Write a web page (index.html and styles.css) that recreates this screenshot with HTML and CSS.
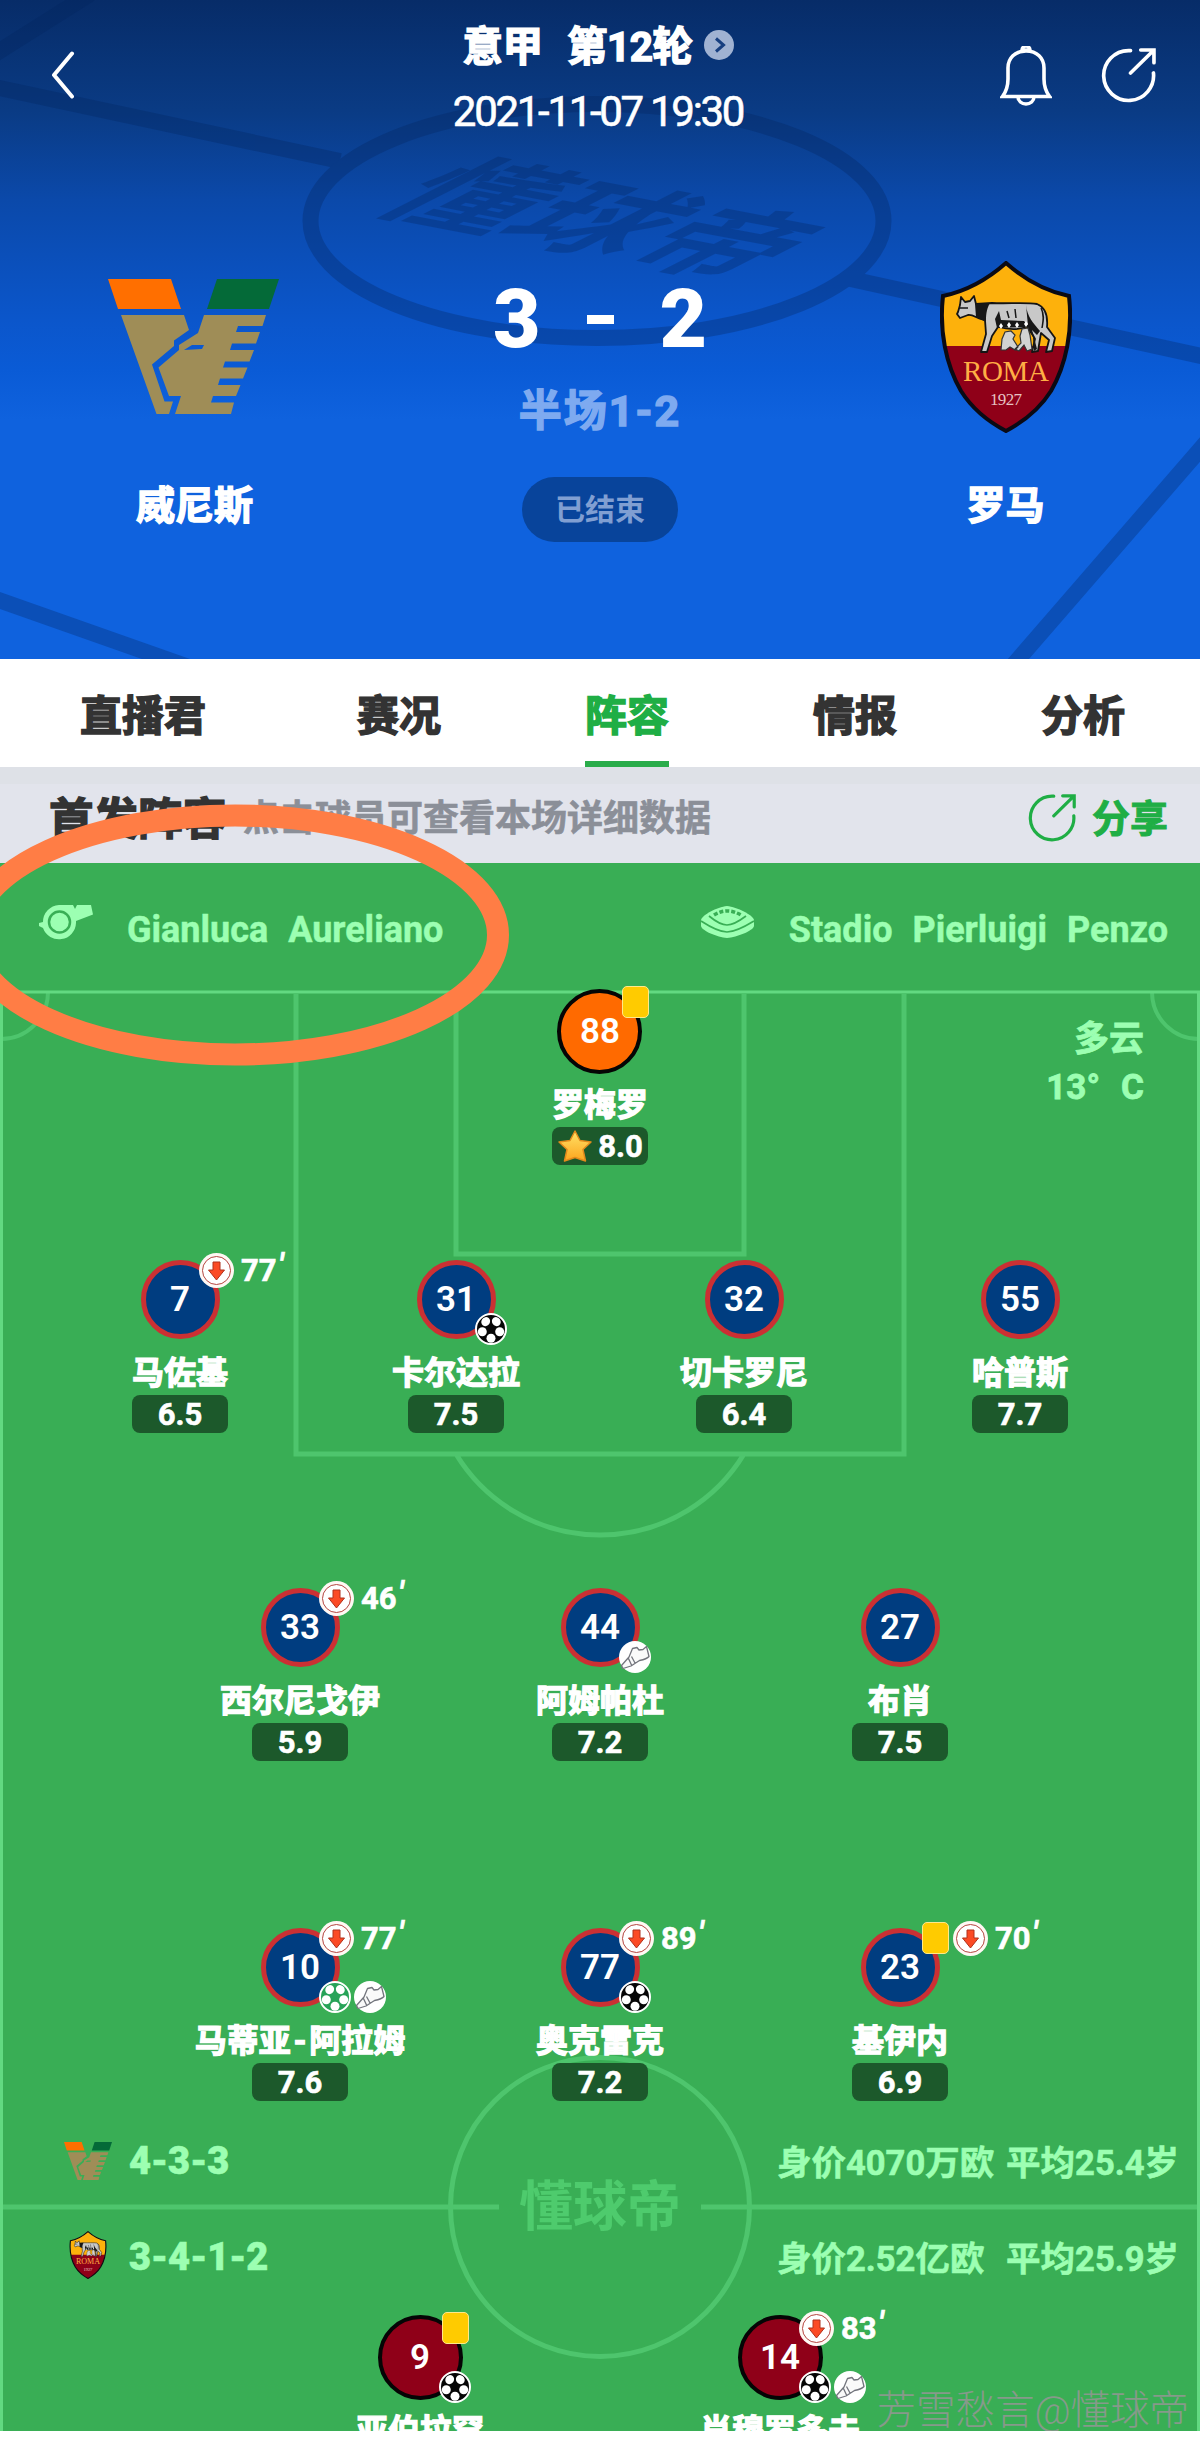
FILE: index.html
```html
<!DOCTYPE html>
<html lang="zh-CN">
<head>
  <meta charset="UTF-8">
  <meta name="viewport" content="width=device-width, initial-scale=1.0">
  <title>威尼斯 3-2 罗马</title>
  <link rel="stylesheet" href="styles.css">
</head>

<body>
  <!-- Shared icons -->
  <svg class="defs" width="0" height="0">
    <symbol id="venezia" viewBox="108 279 171 135">
      <path fill="#ff6f00" d="M108 279h63l10 30h-63z"/>
      <path fill="#046a38" d="M217 279h62l-10 30h-62z"/>
      <path fill="#9f8d57" d="M121 315h63l5 15-15 10.500v5.500l-22 18.500 12.500 37h8.500l-4 12.500h-12.500z"/>
      <path fill="#9f8d57" fill-rule="evenodd" d="M204 315H266L262.500 326H238L236 332H260L256 343.500H232L230 350H254L249.500 361.500H225L223 367.500H247.500L243 378.500H220L218 385H240.500L236 396H213L211 402.500H234L231 414H175L181 396H169L158.500 367.500L179 350V345L198 333ZM184 350L192 345H204L202 349Z"/>
    </symbol>
    <symbol id="roma" viewBox="0 0 132 172">
      <path d="M66 2C49 17 27 30 3 35C-1 70 6 104 21 130C33 149 49 161 66 170C83 161 99 149 111 130C126 104 133 70 129 35C105 30 83 17 66 2Z" fill="#fdb10c"/>
      <path d="M5 85H127C124 102 119 116 111 130C99 149 83 161 66 170C49 161 33 149 21 130C13 116 8 102 5 85Z" fill="#8f0018"/>
      <path d="M66 2C49 17 27 30 3 35C-1 70 6 104 21 130C33 149 49 161 66 170C83 161 99 149 111 130C126 104 133 70 129 35C105 30 83 17 66 2Z" fill="none" stroke="#0a0a14" stroke-width="4"/>
      <!-- wolf -->
      <path d="M18 51L20 44L21 36L25 41L30 40L34 35L36 43L52 42C66 43 86 41 97 43C105 46 108 54 107 66L115 77L112 90L106 91L109 79L101 72L98 90L92 91L95 78L88 65C78 70 66 68 58 66L52 75L47 91H41L46 73L45 59C39 59 33 53 28 54L20 57L17 53Z" fill="#c8c8c8" stroke="#141414" stroke-width="1.800" stroke-linejoin="round"/>
      <path d="M35 43L50 42C46 49 46 55 46 61L36 56ZM59 50L61 59L84 60L92 69L97 88L94 90L93 76L86 66L57 67L55 58ZM86 44C87 55 93 62 100 70L97 74L88 65Z" fill="#171717"/>
      <path d="M19 47h9M67 50l2 7M75 48l1 9M101 47c4 7 2 14 1 20" fill="none" stroke="#171717" stroke-width="1.500"/>
      <path d="M59 65l2-3 2 3-2 3zM67 64l2-3 2 3-2 3zM75 64l2-3 2 3-2 3zM84 63l2-3 2 3-2 3z" fill="#fff"/>
      <path d="M62 78l3-7 6-1 4 4-2 4 5 8-3 3-5-3-4 3h-5zM80 75l2-7 6-1 2 7 2 14-5 2-3-6-5 6-4-2 6-6z" fill="#d2d2d2" stroke="#333" stroke-width="1.200"/>
      <text x="66" y="120" class="roma-name" textLength="86">ROMA</text>
      <text x="66" y="144" class="roma-year" textLength="32">1927</text>
    </symbol>
    <symbol id="share" viewBox="0 0 54 54">
      <path d="M29 2.500H27A24.500 24.500 0 1 0 51.500 24.500M29 24.500L51.500 2.500M39 2H52V14.500" fill="none" stroke="currentColor" stroke-width="3.600" stroke-linecap="round"/>
    </symbol>
    <symbol id="down" viewBox="0 0 35 35">
      <circle cx="17.500" cy="17.500" r="17.500" fill="#fff8f4"/>
      <circle cx="17.500" cy="17.500" r="14" fill="#fff" stroke="#b5453f" stroke-width="1"/>
      <path d="M14 9h7v8h4.500L17.500 27 9.500 17H14z" fill="#fb4a25" stroke="#b0311c" stroke-width="1"/>
    </symbol>
    <symbol id="ball" viewBox="0 0 32 32">
      <circle cx="16" cy="16" r="15" fill="currentColor" stroke="#fff" stroke-width="2"/>
      <g fill="#fff">
        <ellipse cx="10.700" cy="8.600" rx="4.300" ry="4.700" transform="rotate(35 10.700 8.600)"/>
        <ellipse cx="21.300" cy="8.600" rx="4.300" ry="4.700" transform="rotate(-35 21.300 8.600)"/>
        <circle cx="7.300" cy="18.800" r="4.500"/>
        <circle cx="24.700" cy="18.800" r="4.500"/>
        <circle cx="16" cy="25.200" r="4.500"/>
      </g>
    </symbol>
    <symbol id="boot" viewBox="0 0 32 32">
      <circle cx="16" cy="16" r="16" fill="#fff"/>
      <path d="M2.500 24.500L10 16L13.500 7.500L18 6.500L20 9L24 8.500L27.500 5.500L30 15.500Q28 18 20.500 19.500L12 25L4 27.500ZM9.500 17.500L12.500 24M12.500 15.500L16 22" fill="#fafafa" stroke="#73757d" stroke-width="1.300" stroke-linejoin="round"/>
    </symbol>
  </svg>

  <div class="page">
    <!-- Match header -->
    <header class="header">
      <svg class="header-bg" viewBox="0 0 1200 659">
        <g fill="none" stroke="#04245c" stroke-width="16" opacity=".3">
          <path d="M-10 57L90 -6M-10 86L340 161M846 278L1210 358M-10 597L200 671M1008 671L1210 438"/>
          <ellipse cx="597" cy="221" rx="286.500" ry="117"/>
        </g>
        <text class="header-mark" transform="matrix(1.240 .235 -1.300 .660 368 209)">懂球帝</text>
      </svg>
      <div class="nav">
        <svg class="back" viewBox="0 0 24 48"><path d="M21 2.500L3 24L21 45.500" fill="none" stroke="#fff" stroke-width="4" stroke-linecap="round" stroke-linejoin="round"/></svg>
        <div class="title">
          <h1>意甲 第12轮
            <svg viewBox="0 0 30 30"><circle cx="15" cy="15" r="15" fill="#a0b2d2"/><path d="M12 8.500l7.500 6.500-7.500 6.500" fill="none" stroke="#173f80" stroke-width="3"/></svg>
          </h1>
          <p>2021-11-07 19:30</p>
        </div>
        <div class="actions">
          <svg class="bell" viewBox="0 0 52 60"><path d="M2.500 50.500Q8 43 8 33V22C8 12 15 5 26 5S44 12 44 22V33Q44 43 49.500 50.500Z" fill="none" stroke="#fff" stroke-width="3.600"/><path d="M22 4a4 4 0 0 1 8 0zM18 51a8 7 0 0 0 16 0" fill="none" stroke="#fff" stroke-width="3.400"/></svg>
          <svg class="share-top"><use href="#share"/></svg>
        </div>
      </div>
      <div class="match">
        <div class="team">
          <svg class="logo-venezia"><use href="#venezia"/></svg>
          <span>威尼斯</span>
        </div>
        <div class="result">
          <div class="score"><b>3</b><i></i><b>2</b></div>
          <div class="half">半场1-2</div>
          <div class="status">已结束</div>
        </div>
        <div class="team">
          <svg class="logo-roma"><use href="#roma"/></svg>
          <span>罗马</span>
        </div>
      </div>
    </header>

    <nav class="tabs">
      <a>直播君</a>
      <a>赛况</a>
      <a class="active">阵容</a>
      <a>情报</a>
      <a>分析</a>
    </nav>

    <div class="section">
      <h2>首发阵容</h2>
      <span class="hint">点击球员可查看本场详细数据</span>
      <span class="share"><svg><use href="#share"/></svg>分享</span>
    </div>

    <!-- Pitch -->
    <main class="pitch">
      <svg class="lines" viewBox="0 0 1200 1568">
        <g fill="none" stroke="#4ec56d" stroke-width="5">
          <path d="M296 131V591H904V131M456 131V391H744V131M456 591A168.500 168.500 0 0 0 744 591"/>
          <path d="M0 1344H499M701 1344H1200"/>
          <circle cx="600" cy="1344" r="149.500"/>
          <path stroke-width="4" d="M48 129A47 47 0 0 1 0 176M1152 129A47 47 0 0 0 1200 176"/>
        </g>
        <path d="M1.500 1568V129H1198.500V1568" fill="none" stroke="#62d981" stroke-width="3"/>
        <text x="600" y="1363" class="center-mark">懂球帝</text>
      </svg>

      <div class="info">
        <span class="referee">
          <svg viewBox="0 0 54 36"><path d="M20 1H34L36 5 38 1H52L54 10.500L37 17V19A17 17 0 0 1 4 24L0 22V19L4 18A17 17 0 0 1 20 1Z" fill="#9cffb2"/><circle cx="20.500" cy="18" r="10.500" fill="none" stroke="#39ae55" stroke-width="2.500"/></svg>
          Gianluca Aureliano
        </span>
        <span class="stadium">
          <svg viewBox="0 0 55 32"><path d="M1 14C2 9 17 1 27 0C37 1 53 9 54 14V20C53 25 37 31 27 32C17 31 2 25 1 20Z" fill="#9cffb2"/><path d="M1 15Q18 26 27 26T54 15M9 10Q20 19 27 19T46 10" fill="none" stroke="#39ae55" stroke-width="1.700"/><path d="M14 9Q27 1 41 9" fill="none" stroke="#39ae55" stroke-width="3.500" stroke-dasharray="4 2"/></svg>
          Stadio Pierluigi Penzo
        </span>
      </div>

      <div class="weather"><span>多云</span><span>13°<i></i>C</span></div>

      <div class="row keeper">
        <div class="player">
          <div class="shirt orange">88<div class="top"><i class="card"></i></div></div>
          <span class="name">罗梅罗</span>
          <span class="rating"><svg viewBox="0 0 36 34"><defs><linearGradient id="gold" x1="0" y1="0" x2="0" y2="1"><stop offset="0" stop-color="#ffe267"/><stop offset="1" stop-color="#fca51e"/></linearGradient></defs><path d="M18 2L23 11.500L34 13L26 20.500L28.500 32L18 28.500L7.500 32L10 20.500L2 13L13 11.500Z" fill="url(#gold)" stroke="#e28a1c" stroke-width="1.500" stroke-linejoin="round"/></svg>8.0</span>
        </div>
      </div>

      <div class="row defenders">
        <div class="player">
          <div class="shirt">7<div class="top"><svg><use href="#down"/></svg>77<em>′</em></div></div>
          <span class="name">马佐基</span><span class="rating">6.5</span>
        </div>
        <div class="player">
          <div class="shirt">31<div class="bottom"><svg><use href="#ball"/></svg></div></div>
          <span class="name">卡尔达拉</span><span class="rating">7.5</span>
        </div>
        <div class="player">
          <div class="shirt">32</div>
          <span class="name">切卡罗尼</span><span class="rating">6.4</span>
        </div>
        <div class="player">
          <div class="shirt">55</div>
          <span class="name">哈普斯</span><span class="rating">7.7</span>
        </div>
      </div>

      <div class="row midfield">
        <div class="player">
          <div class="shirt">33<div class="top"><svg><use href="#down"/></svg>46<em>′</em></div></div>
          <span class="name">西尔尼戈伊</span><span class="rating">5.9</span>
        </div>
        <div class="player">
          <div class="shirt">44<div class="bottom"><svg><use href="#boot"/></svg></div></div>
          <span class="name">阿姆帕杜</span><span class="rating">7.2</span>
        </div>
        <div class="player">
          <div class="shirt">27</div>
          <span class="name">布肖</span><span class="rating">7.5</span>
        </div>
      </div>

      <div class="row forwards">
        <div class="player">
          <div class="shirt">10
            <div class="top"><svg><use href="#down"/></svg>77<em>′</em></div>
            <div class="bottom"><svg class="green"><use href="#ball"/></svg><svg><use href="#boot"/></svg></div>
          </div>
          <span class="name">马蒂亚<i class="dash">-</i>阿拉姆</span><span class="rating">7.6</span>
        </div>
        <div class="player">
          <div class="shirt">77
            <div class="top"><svg><use href="#down"/></svg>89<em>′</em></div>
            <div class="bottom"><svg><use href="#ball"/></svg></div>
          </div>
          <span class="name">奥克雷克</span><span class="rating">7.2</span>
        </div>
        <div class="player">
          <div class="shirt">23<div class="top"><i class="card"></i><svg><use href="#down"/></svg>70<em>′</em></div></div>
          <span class="name">基伊内</span><span class="rating">6.9</span>
        </div>
      </div>

      <div class="formation home">
        <svg><use href="#venezia"/></svg>
        <b>4-3-3</b>
        <span class="value">身价4070万欧</span><span class="age">平均25.4岁</span>
      </div>
      <div class="formation away">
        <svg><use href="#roma"/></svg>
        <b>3-4-1-2</b>
        <span class="value">身价2.52亿欧</span><span class="age">平均25.9岁</span>
      </div>

      <div class="row strikers">
        <div class="player">
          <div class="shirt red">9
            <div class="top"><i class="card"></i></div>
            <div class="bottom"><svg><use href="#ball"/></svg></div>
          </div>
          <span class="name">亚伯拉罕</span>
        </div>
        <div class="player">
          <div class="shirt red">14
            <div class="top"><svg><use href="#down"/></svg>83<em>′</em></div>
            <div class="bottom"><svg><use href="#ball"/></svg><svg><use href="#boot"/></svg></div>
          </div>
          <span class="name">肖穆罗多夫</span>
        </div>
      </div>

      <div class="watermark">芳雪愁言@懂球帝</div>
    </main>

    <!-- Marker round the referee -->
    <svg class="marker" viewBox="0 0 520 280"><ellipse cx="235" cy="140" rx="263" ry="119.500" fill="none" stroke="#ff7d45" stroke-width="22"/></svg>
  </div>
</body>
</html>
```
FILE: styles.css
```css
* {
  box-sizing: border-box;
}
body {
  margin: 0;
  background: #fff;
  font-family: Roboto, "Noto Sans CJK SC", sans-serif;
  font-weight: 700;
}
h1, h2, p {
  margin: 0;
}
svg {
  display: block;
  flex: none;
}
.defs {
  position: absolute;
}
.page {
  position: relative;
  width: 1200px;
  height: 2443px;
  overflow: hidden;
}
.roma-name, .roma-year {
  font-family: "Liberation Serif", serif;
  text-anchor: middle;
}
.roma-name {
  font-size: 29px;
  font-weight: 400;
  fill: #ffae45;
}
.roma-year {
  font-size: 17px;
  font-weight: 400;
  fill: #e6c3c3;
}

/* header */
.header {
  position: relative;
  height: 659px;
  color: #fff;
  background: linear-gradient(#072c68 0, #0a3b84 110px, #0b49aa 200px, #0b56cb 320px, #0a5bd6 370px, #0f62de 420px);
}
.header-bg {
  position: absolute;
  left: 0;
  top: 0;
  width: 1200px;
  height: 659px;
}
.header-mark {
  font-size: 100px;
  fill: #04245c;
  opacity: .3;
}
.nav {
  position: relative;
  height: 150px;
  padding: 0 44px 0 51px;
  display: flex;
  justify-content: space-between;
}
.back {
  width: 24px;
  height: 48px;
  margin-top: 51px;
}
.title {
  flex: 1;
  padding: 13px 0 0 121px;
  text-align: center;
}
.title h1 {
  height: 60px;
  display: flex;
  justify-content: center;
  align-items: center;
  font-size: 40.500px;
  letter-spacing: -.5px;
  word-spacing: 15px;
  -webkit-text-stroke: 1.500px #fff;
}
.title h1 svg {
  width: 30px;
  height: 30px;
  margin: 3px 0 0 11px;
}
.title p {
  font-size: 42px;
  font-weight: 400;
  line-height: 78px;
  letter-spacing: -2.300px;
  -webkit-text-stroke: .6px;
}
.actions {
  display: flex;
  gap: 49px;
  padding-top: 46px;
}
.bell {
  width: 52px;
  height: 60px;
}
.share-top {
  width: 55px;
  height: 55px;
  margin-top: 2px;
}
.match {
  position: relative;
  display: flex;
  justify-content: space-between;
}
.team {
  width: 389px;
  padding-top: 111px;
  display: flex;
  flex-direction: column;
  align-items: center;
}
.team span {
  margin-top: 49px;
  font-size: 39px;
  line-height: 48px;
  -webkit-text-stroke: 1.500px #fff;
}
.logo-venezia {
  width: 171px;
  height: 135px;
  margin: 18px 2px 19px 0;
}
.logo-roma {
  width: 132px;
  height: 172px;
}
.result {
  width: 300px;
  display: flex;
  flex-direction: column;
  align-items: center;
}
.score {
  margin-top: 119px;
  display: flex;
  align-items: center;
  font-size: 82px;
  line-height: 100px;
}
.score i {
  width: 27px;
  height: 9px;
  margin: 0 46px;
  background: #fff;
}
.half {
  margin-top: 11px;
  font-size: 43px;
  line-height: 62px;
  letter-spacing: 2px;
  color: #7eaaf0;
  -webkit-text-stroke: 1.500px #7eaaf0;
}
.status {
  width: 156px;
  height: 65px;
  margin-top: 35px;
  border-radius: 33px;
  background: #08449b;
  color: #809fd2;
  font-size: 30px;
  line-height: 65px;
  text-align: center;
}

/* tabs */
.tabs {
  height: 108px;
  padding-left: 80px;
  display: flex;
  gap: 144px;
  background: #fff;
}
.tabs a {
  height: 108px;
  font-size: 42px;
  line-height: 115px;
  color: #333;
  -webkit-text-stroke: 1.500px;
}
.tabs a:first-child {
  margin-right: 7px;
}
.tabs .active {
  color: #1fae45;
  border-bottom: 6px solid #2aac4a;
}

/* section title */
.section {
  height: 96px;
  padding: 0 32px 0 49px;
  display: flex;
  align-items: center;
  background: linear-gradient(#dee1e7 17px, #e2e4ec 17px);
}
.section h2 {
  font-size: 44.500px;
  color: #333;
  -webkit-text-stroke: 1.500px;
}
.hint {
  margin-left: 16px;
  font-size: 36px;
  color: #8b8f98;
  -webkit-text-stroke: .6px;
}
.share {
  margin-left: auto;
  display: flex;
  align-items: center;
  gap: 16px;
  font-size: 38px;
  color: #1fae45;
  -webkit-text-stroke: 1px;
}
.share svg {
  width: 48px;
  height: 48px;
  margin-top: 6px;
}

/* pitch */
.pitch {
  position: relative;
  height: 1568px;
  overflow: hidden;
  background: #39ae55;
  color: #fff;
}
.lines {
  position: absolute;
  left: 0;
  top: 0;
  width: 1200px;
  height: 1568px;
}
.center-mark {
  font-size: 54px;
  font-weight: 700;
  fill: #4ecb6d;
  text-anchor: middle;
}
.info {
  position: relative;
  height: 126px;
  padding: 0 32px 0 39px;
  display: flex;
  justify-content: space-between;
  align-items: center;
  color: #9cffb2;
  font-size: 36px;
  word-spacing: 11px;
  -webkit-text-stroke: .5px;
}
.info span {
  display: flex;
  align-items: center;
  padding-top: 8px;
}
.info svg {
  margin-top: -16px;
}
.referee svg {
  width: 54px;
  height: 36px;
  margin-right: 34px;
}
.stadium svg {
  width: 55px;
  height: 32px;
  margin-right: 34px;
}
.weather {
  position: absolute;
  right: 56px;
  top: 153px;
  display: flex;
  flex-direction: column;
  align-items: flex-end;
  color: #9cffb2;
  font-size: 35px;
  line-height: 48px;
  -webkit-text-stroke: .8px;
}
.weather i {
  display: inline-block;
  width: 21px;
}
.row {
  position: relative;
  display: flex;
  justify-content: center;
  height: 176px;
}
.player {
  display: flex;
  flex-direction: column;
  align-items: center;
}
.defenders {
  margin-top: 92px;
}
.defenders .player {
  width: 276px;
}
.defenders .player:nth-child(3) {
  margin-left: 12px;
}
.midfield {
  margin-top: 152px;
}
.forwards {
  margin-top: 164px;
}
.midfield .player, .forwards .player {
  width: 300px;
}
.strikers {
  margin-top: 22px;
}
.strikers .player {
  width: 360px;
}
.shirt {
  position: relative;
  width: 79px;
  height: 79px;
  margin: 3px 0;
  border: 5px solid #cb3033;
  border-radius: 50%;
  background: #003d80;
  font-size: 35px;
  font-weight: 600;
  line-height: 70px;
  text-align: center;
}
.orange, .red {
  width: 85px;
  height: 85px;
  margin: 0;
  border: 4px solid #050505;
  line-height: 78px;
}
.orange {
  background: #ff6a00;
}
.red {
  background: #8f0018;
}
.top, .bottom {
  position: absolute;
  display: flex;
  align-items: center;
}
.top {
  left: calc(50% + 19px);
  top: calc(50% - 47px);
  height: 35px;
  font-size: 31px;
  font-weight: 700;
  line-height: 35px;
  -webkit-text-stroke: .6px #fff;
}
.top svg {
  width: 35px;
  height: 35px;
  margin-right: 7px;
}
.top em {
  margin-left: 2px;
  line-height: 24px;
  align-self: flex-start;
}
.card {
  width: 27px;
  height: 32px;
  margin: 0 4px 0 3px;
  border: 1.500px solid #ffe98a;
  border-radius: 5px;
  background: #ffcb00;
}
.bottom {
  left: calc(50% + 19px);
  top: calc(50% + 13px);
  gap: 3px;
}
.bottom svg {
  width: 32px;
  height: 32px;
  color: #060606;
}
.bottom .green {
  color: #27a358;
}
.name {
  height: 53px;
  font-size: 32px;
  line-height: 63px;
  white-space: nowrap;
  -webkit-text-stroke: 1.300px #fff;
}
.dash {
  margin: 0 3px;
  font-style: normal;
}
.rating {
  width: 96px;
  height: 38px;
  display: flex;
  justify-content: center;
  align-items: center;
  border-radius: 8px;
  background: #1c592b;
  font-size: 31px;
  -webkit-text-stroke: .6px #fff;
}
.rating svg {
  width: 36px;
  height: 34px;
  margin-right: 5px;
}

/* formations */
.formation {
  position: relative;
  padding-right: 21px;
  display: flex;
  align-items: center;
  color: #9cffb2;
  font-size: 34.500px;
  white-space: nowrap;
  -webkit-text-stroke: .6px;
}
.home {
  height: 120px;
  padding-left: 64px;
}
.away {
  height: 72px;
  padding-left: 69px;
}
.formation b {
  margin-right: auto;
  font-size: 38px;
}
.home svg {
  width: 48px;
  height: 38px;
  margin-right: 17px;
}
.away svg {
  width: 38px;
  height: 48px;
  margin: -4px 22px 0 0;
}
.value {
  width: 231px;
  padding-bottom: 3px;
}
.age {
  width: 171px;
  padding-bottom: 3px;
  display: flex;
  justify-content: flex-end;
}
.watermark {
  position: absolute;
  right: 11px;
  bottom: -7px;
  color: rgba(150, 150, 150, .85);
  font-size: 39.500px;
  font-weight: 300;
  line-height: 54px;
}
.marker {
  position: absolute;
  left: 0;
  top: 795px;
  width: 520px;
  height: 280px;
}
```
